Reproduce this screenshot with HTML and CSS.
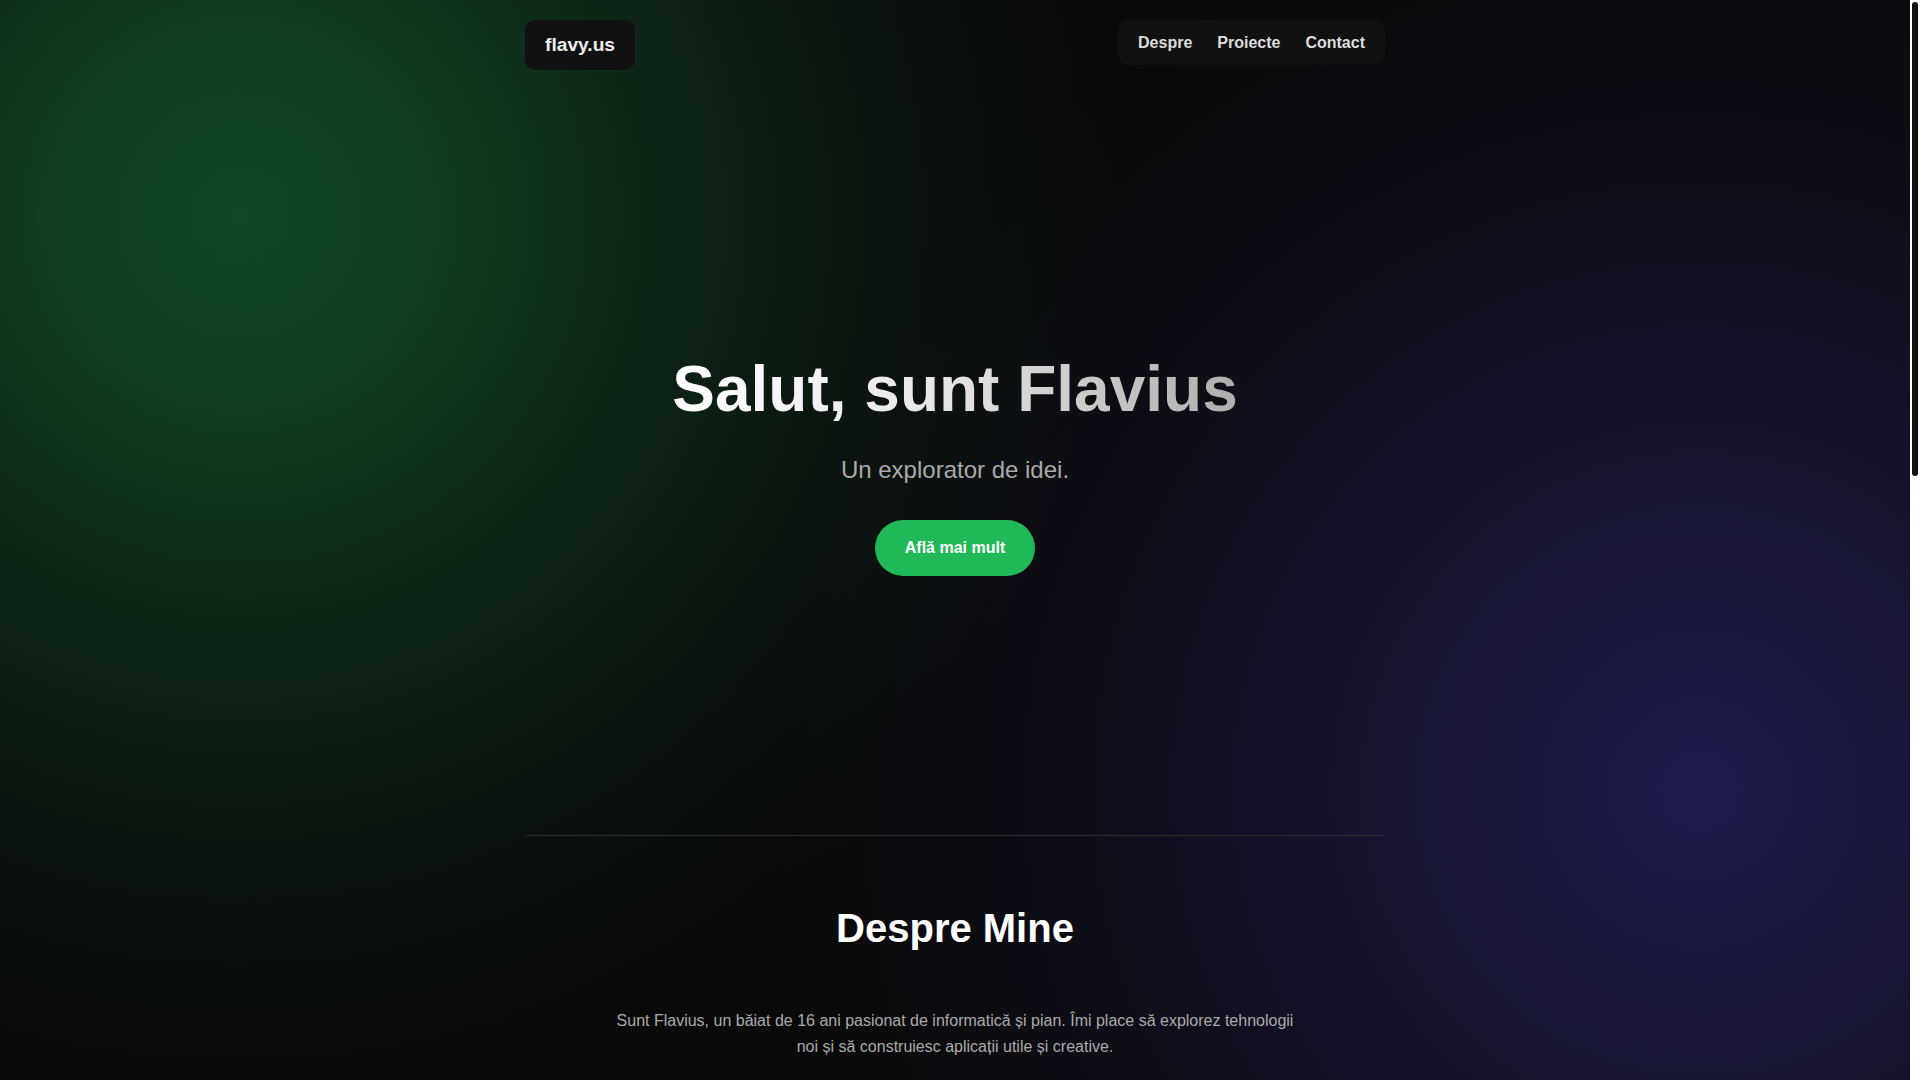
FILE: index.html
```html
<!DOCTYPE html>
<html lang="ro">
<head>
<meta charset="utf-8">
<title>flavy.us</title>
<link rel="stylesheet" href="styles.css">
</head>
<body>
<div class="container">
  <header class="header">
    <a class="logo" href="#">flavy.us</a>
    <nav class="nav">
      <a href="#despre">Despre</a>
      <a href="#proiecte">Proiecte</a>
      <a href="#contact">Contact</a>
    </nav>
  </header>

  <section class="hero">
    <h1 class="hero-title">Salut, sunt Flavius</h1>
    <p class="hero-sub">Un explorator de idei.</p>
    <a class="btn" href="#despre">Află mai mult</a>
  </section>

  <section class="section" id="despre">
    <h2 class="section-title">Despre Mine</h2>
    <p class="section-text">Sunt Flavius, un băiat de 16 ani pasionat de informatică și pian. Îmi place să explorez tehnologii noi și să construiesc aplicații utile și creative.</p>
  </section>

  <section class="section" id="proiecte">
    <h2 class="section-title">Proiecte</h2>
    <div class="cards">
      <div class="card"><h3>flavy.us</h3><p>Site-ul meu personal, construit de la zero.</p></div>
      <div class="card"><h3>Aplicații</h3><p>Unelte mici care rezolvă probleme reale.</p></div>
      <div class="card"><h3>Muzică</h3><p>Experimente cu pian și sunet.</p></div>
    </div>
  </section>

  <section class="section" id="contact">
    <h2 class="section-title">Contact</h2>
    <p class="section-text">Vrei să colaborăm? Scrie-mi oricând.</p>
    <a class="btn" href="#">Trimite un mesaj</a>
  </section>

  <footer class="footer">© flavy.us</footer>
</div>
<div class="scrollbar" aria-hidden="true"><div class="scrollbar-thumb"></div></div>
</body>
</html>
```

FILE: styles.css
```css
html {
  background: #0a0a0a;
}
body {
  margin: 0;
  padding-right: 10px;
  font-family: "Liberation Sans", Arial, sans-serif;
  color: #eeeeee;
  background-color: #0a0a0a;
  background-image:
    radial-gradient(circle 880px at 240px 215px,
      rgba(17, 72, 37, 1) 0%,
      rgba(17, 72, 37, 0.84) 20%,
      rgba(17, 72, 37, 0.52) 42%,
      rgba(17, 72, 37, 0.2) 68%,
      rgba(17, 72, 37, 0) 100%),
    radial-gradient(circle 920px at 1700px 790px,
      rgba(31, 27, 76, 1) 0%,
      rgba(31, 27, 76, 0.8) 20%,
      rgba(31, 27, 76, 0.48) 42%,
      rgba(31, 27, 76, 0.2) 68%,
      rgba(31, 27, 76, 0) 100%);
  background-attachment: fixed;
}
a {
  text-decoration: none;
  color: inherit;
}
.scrollbar {
  position: fixed;
  top: 0;
  right: 0;
  width: 10px;
  height: 100vh;
  background: #ffffff;
}
.scrollbar-thumb {
  margin: 2px 2px 0;
  height: 474px;
  border-radius: 4px;
  background: #111111;
}
.container {
  width: 860px;
  margin: 0 auto;
}
.header {
  display: flex;
  justify-content: space-between;
  align-items: flex-start;
  padding-top: 20px;
}
.logo {
  display: block;
  background: #111111;
  border-radius: 10px;
  padding: 14px 20px;
  font-size: 19.2px;
  line-height: 22px;
  font-weight: 700;
  color: #eeeeee;
}
.nav {
  display: flex;
  gap: 25px;
  background: #111111;
  border-radius: 10px;
  padding: 13px 20px;
}
.nav a {
  font-size: 16px;
  line-height: 19px;
  font-weight: 700;
  color: #dddddd;
}
.hero {
  display: flex;
  flex-direction: column;
  align-items: center;
  text-align: center;
  padding: 281px 0 259px;
}
.hero-title {
  margin: 0 0 24px;
  font-size: 64px;
  line-height: 77px;
  font-weight: 700;
  background: linear-gradient(90deg, #ffffff 0%, #e8e8e8 45%, #aeaeae 100%);
  -webkit-background-clip: text;
  background-clip: text;
  color: transparent;
}
.hero-sub {
  margin: 0 0 32px;
  font-size: 24px;
  line-height: 36px;
  color: #aaaaaa;
}
.btn {
  display: inline-block;
  background: #1fba57;
  color: #ffffff;
  font-size: 16px;
  line-height: 18px;
  font-weight: 700;
  padding: 19px 30px;
  border-radius: 999px;
}
.section {
  border-top: 1px solid #2b2b2b;
  padding: 68px 0 80px;
  text-align: center;
}
.section-title {
  margin: 0 0 56px;
  font-size: 40px;
  line-height: 48px;
  font-weight: 700;
  color: #ffffff;
}
.section-text {
  max-width: 700px;
  margin: 0 auto;
  font-size: 16px;
  line-height: 25.6px;
  color: #aaaaaa;
}
#contact .section-text {
  margin-bottom: 32px;
}
.cards {
  display: grid;
  grid-template-columns: repeat(3, 1fr);
  gap: 20px;
}
.card {
  background: #111111;
  border-radius: 12px;
  padding: 28px 22px;
  text-align: left;
  min-height: 140px;
}
.card h3 {
  margin: 0 0 12px;
  font-size: 20px;
  color: #ffffff;
}
.card p {
  margin: 0;
  font-size: 15px;
  line-height: 24px;
  color: #aaaaaa;
}
.footer {
  border-top: 1px solid #2b2b2b;
  padding: 40px 0 60px;
  text-align: center;
  font-size: 14px;
  color: #777777;
}
```
